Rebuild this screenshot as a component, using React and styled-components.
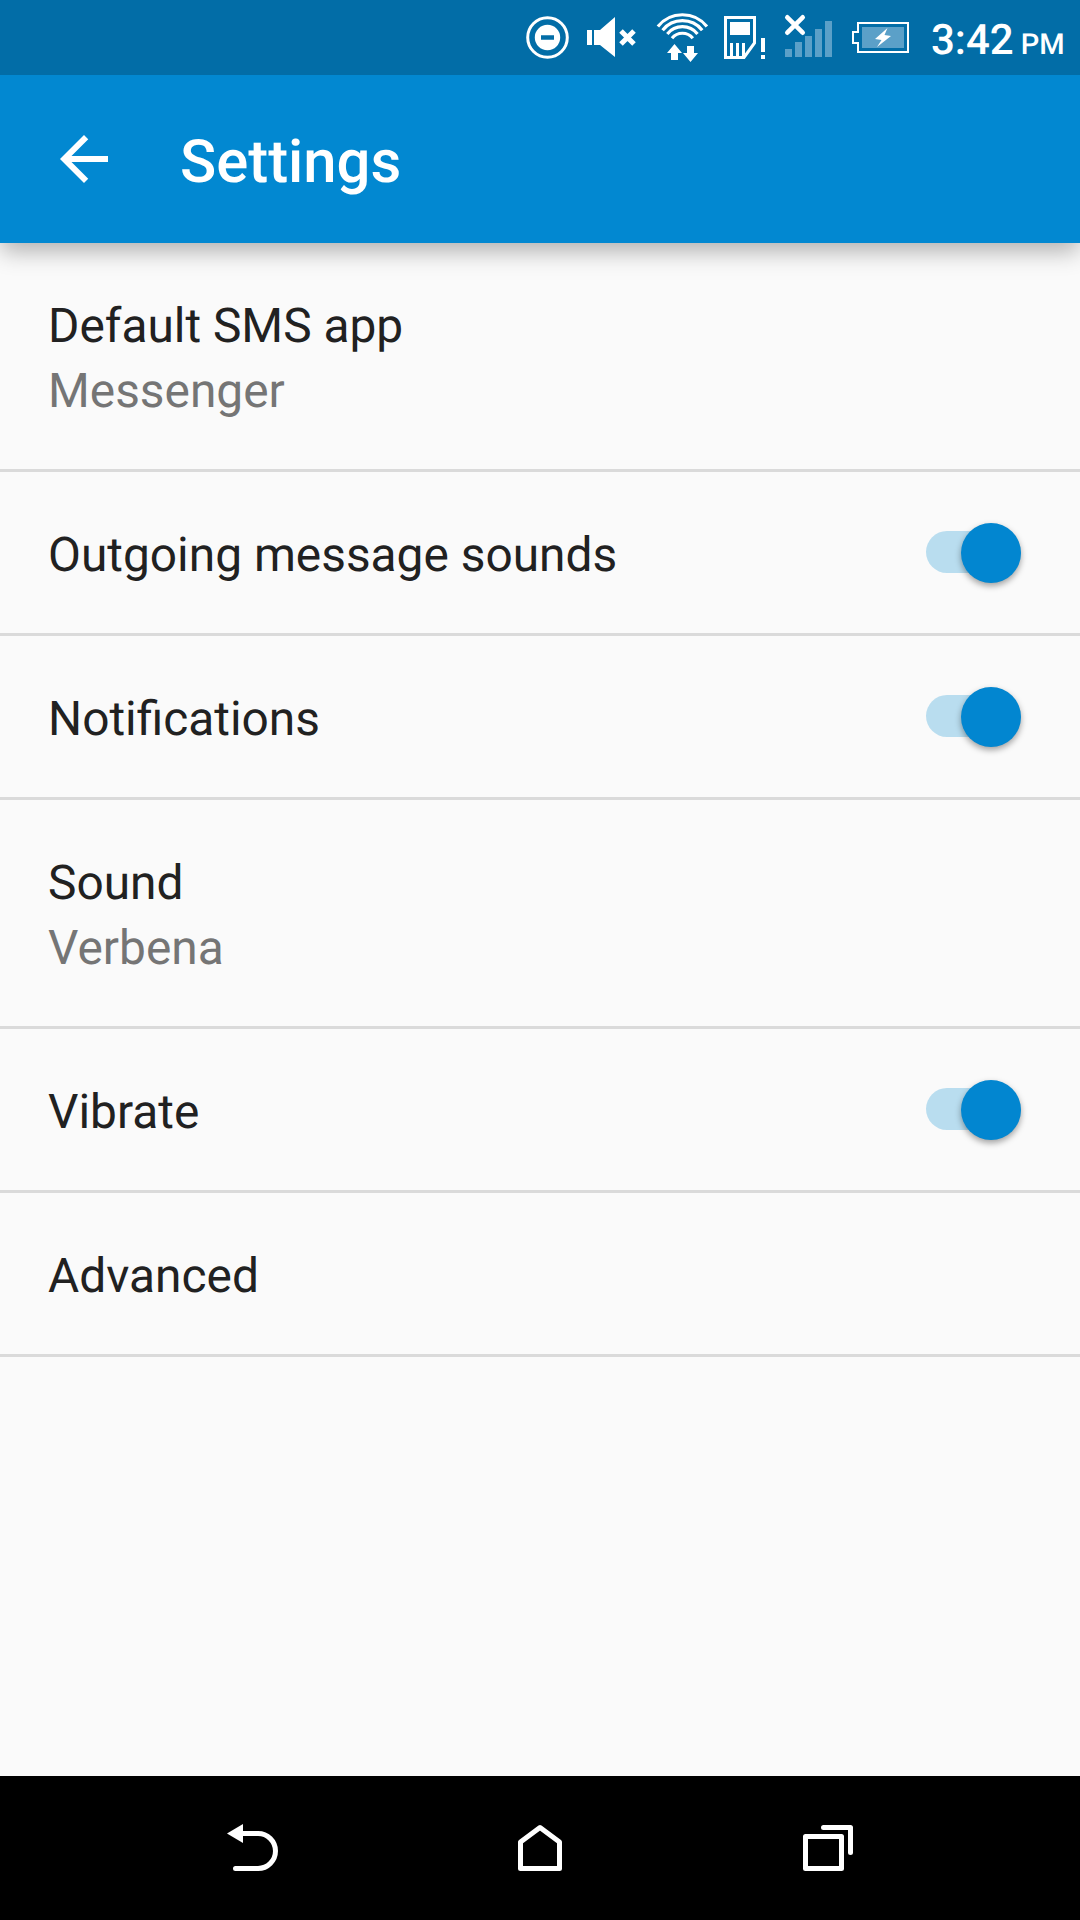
import React, { useState } from 'react';
import styled, { createGlobalStyle } from 'styled-components';

const GlobalStyle = createGlobalStyle`
  * {
    box-sizing: border-box;
  }

  body {
    margin: 0;
    background: #fafafa;
    font-family: Roboto, sans-serif;
    text-rendering: geometricPrecision;
  }
`;

const Screen = styled.div`
  display: flex;
  flex-direction: column;
  width: 1080px;
  height: 1920px;
  background: #fafafa;
  overflow: hidden;
`;

const StatusBar = styled.div`
  display: flex;
  flex: none;
  justify-content: flex-end;
  height: 75px;
  padding-right: 14px;
  background: #026da7;
  color: #fff;
  z-index: 2;
`;

const StatusIcon = styled.svg`
  display: block;
  flex: none;
  width: ${({ $width }) => $width}px;
  height: 75px;
`;

const Clock = styled.div`
  display: flex;
  align-items: baseline;
  width: 141px;
  padding-left: 6px;
  font-size: 42px;
  font-weight: 500;
  line-height: 81px;
  white-space: nowrap;
`;

const Meridiem = styled.span`
  margin-left: 7px;
  font-size: 29px;
`;

const AppBar = styled.header`
  display: flex;
  flex: none;
  align-items: center;
  height: 168px;
  padding-left: 48px;
  background: #0288d1;
  color: #fff;
  box-shadow: 0 9px 22px -1px rgba(0, 0, 0, 0.3);
  z-index: 1;
`;

const BackButton = styled.button`
  display: flex;
  padding: 0;
  border: none;
  background: none;
  color: inherit;
  cursor: pointer;

  svg {
    width: 72px;
    height: 72px;
  }
`;

const Title = styled.h1`
  margin: 5px 0 0 60px;
  font-size: 59.8px;
  font-weight: 500;
  line-height: 70px;
`;

const List = styled.main`
  flex: 1;
`;

const Row = styled.div`
  display: flex;
  justify-content: space-between;
  align-items: center;
  padding: 0 59px 0 48px;
  border-bottom: 3px solid #dadada;
`;

const Labels = styled.div`
  padding: 51px 0 45px;
  font-size: 47.85px;
  line-height: 65px;
`;

const Label = styled.div`
  color: #212121;
`;

const Summary = styled.div`
  color: #757575;
`;

const Track = styled.button`
  display: flex;
  align-items: center;
  justify-content: ${({ $on }) => ($on ? 'flex-end' : 'flex-start')};
  width: 95px;
  height: 42px;
  margin-bottom: 1px;
  padding: 0;
  border: none;
  border-radius: 21px;
  background: ${({ $on }) => ($on ? '#b9ddef' : '#b9b9b9')};
  cursor: pointer;
`;

const Thumb = styled.span`
  flex: none;
  width: 60px;
  height: 60px;
  margin-top: 1px;
  border-radius: 50%;
  background: ${({ $on }) => ($on ? '#0286d0' : '#f1f1f1')};
  box-shadow: 0 3px 6px rgba(0, 0, 0, 0.36);
`;

const NavBar = styled.nav`
  display: flex;
  flex: none;
  justify-content: center;
  height: 144px;
  background: #000;
`;

const NavButton = styled.button`
  display: flex;
  justify-content: center;
  width: 288px;
  padding: 0;
  border: none;
  background: none;
  color: #fff;
  cursor: pointer;

  svg {
    width: 120px;
    height: 144px;
  }
`;

const settings = [
  { id: 'app', label: 'Default SMS app', summary: 'Messenger' },
  { id: 'outgoing', label: 'Outgoing message sounds', toggle: true },
  { id: 'notifications', label: 'Notifications', toggle: true },
  { id: 'sound', label: 'Sound', summary: 'Verbena' },
  { id: 'vibrate', label: 'Vibrate', toggle: true },
  { id: 'advanced', label: 'Advanced' }
];

const DoNotDisturbIcon = () => (
  <StatusIcon $width={70} viewBox="0 0 70 75" fill="#fff">
    <circle cx="32.5" cy="37.5" r="19.8" fill="none" stroke="#fff" strokeWidth="3" />
    <path fillRule="evenodd" d="M32.5 24.8a12.7 12.7 0 1 0 0 25.4a12.7 12.7 0 1 0 0-25.4zM26 35.3h13v4.4H26z" />
  </StatusIcon>
);

const MutedIcon = () => (
  <StatusIcon $width={60} viewBox="0 0 60 75" fill="#fff">
    <path d="M2 30h5v15H2zM9 30h6L30 17v40L15 45H9z" />
    <path d="M36 31l13 13M49 31L36 44" stroke="#fff" strokeWidth="5" />
  </StatusIcon>
);

const WifiIcon = () => (
  <StatusIcon $width={70} viewBox="0 0 70 75" fill="#fff">
    <g fill="none" stroke="#fff" strokeWidth="3.2">
      <path d="M12.9 26.5a31.4 31.4 0 0 1 49 0" />
      <path d="M17.6 30.2a25.4 25.4 0 0 1 39.6 0" />
      <path d="M22.3 33.9a19.4 19.4 0 0 1 30.2 0" />
      <path d="M27 38.2a13.4 13.4 0 0 1 20.8 0" />
    </g>
    <path d="M29.5 44L22 53h4v7h7v-7h4zM42 46h7v7h4l-7.5 9L38 53h4z" />
  </StatusIcon>
);

const SimIcon = () => (
  <StatusIcon $width={60} viewBox="0 0 60 75" fill="#fff">
    <path d="M10.5 17.5h29V43L29 57.5H10.5z" fill="none" stroke="#fff" strokeWidth="3" />
    <path d="M15 22h20v13H15zM15 43h3v13h-3zM21 43h3v13h-3zM27 43h3v11l-1 2h-2z" />
    <path d="M46 38h4v14h-4zM46 55h4v4h-4z" />
  </StatusIcon>
);

const SignalIcon = () => (
  <StatusIcon $width={70} viewBox="0 0 70 75">
    <path
      fill="#5ba0c8"
      d="M10 49h7v8h-7zM20 42h7v15h-7zM30 36h7v21h-7zM40 29h7v28h-7zM50 21h7v36h-7z"
    />
    <path d="M12.3 17.3l15.4 15.4M27.7 17.3L12.3 32.7" stroke="#fff" strokeWidth="4.6" strokeLinecap="round" />
  </StatusIcon>
);

const BatteryIcon = () => (
  <StatusIcon $width={80} viewBox="0 0 80 75">
    <path d="M17 27h42v21H17z" fill="#5ba0c8" />
    <path d="M13 23h50v29H13v-9H8V32h5z" fill="none" stroke="#fff" strokeWidth="2" />
    <path d="M42.5 28L30 39l6.5 1L32 47l14-11-6.5-1z" fill="#fff" />
  </StatusIcon>
);

const SettingRow = ({ label, summary, toggle }) => {
  const [isOn, setIsOn] = useState(true);

  return (
    <Row>
      <Labels>
        <Label>{label}</Label>
        {summary && <Summary>{summary}</Summary>}
      </Labels>
      {toggle && (
        <Track $on={isOn} role="switch" aria-checked={isOn} aria-label={label} onClick={() => setIsOn(!isOn)}>
          <Thumb $on={isOn} />
        </Track>
      )}
    </Row>
  );
};

const App = () => (
  <>
    <GlobalStyle />
    <Screen>
      <StatusBar>
        <DoNotDisturbIcon />
        <MutedIcon />
        <WifiIcon />
        <SimIcon />
        <SignalIcon />
        <BatteryIcon />
        <Clock>
          3:42<Meridiem>PM</Meridiem>
        </Clock>
      </StatusBar>

      <AppBar>
        <BackButton aria-label="Back">
          <svg viewBox="0 0 24 24" fill="currentColor">
            <path d="M20 11H7.83l5.59-5.59L12 4l-8 8 8 8 1.41-1.41L7.83 13H20v-2z" />
          </svg>
        </BackButton>
        <Title>Settings</Title>
      </AppBar>

      <List>
        {settings.map(item => (
          <SettingRow key={item.id} {...item} />
        ))}
      </List>

      <NavBar>
        <NavButton aria-label="Back">
          <svg viewBox="0 0 120 144" fill="none" stroke="currentColor" strokeWidth="5" strokeLinecap="round">
            <path d="M49 57.5h17a17.5 17.5 0 0 1 0 35H43.5" />
            <path d="M35 57.5L51 48v19z" fill="currentColor" stroke="none" />
          </svg>
        </NavButton>
        <NavButton aria-label="Home">
          <svg viewBox="0 0 120 144" fill="none" stroke="currentColor" strokeWidth="5" strokeLinejoin="round">
            <path d="M40.5 66L60 51.5 79.5 66v26.5h-39z" />
          </svg>
        </NavButton>
        <NavButton aria-label="Recent apps">
          <svg
            viewBox="0 0 120 144"
            fill="none"
            stroke="currentColor"
            strokeWidth="5"
            strokeLinecap="round"
            strokeLinejoin="round"
          >
            <path d="M37.5 60.5h36v32h-36zM55.5 51.5h27v25" />
          </svg>
        </NavButton>
      </NavBar>
    </Screen>
  </>
);

export default App;
